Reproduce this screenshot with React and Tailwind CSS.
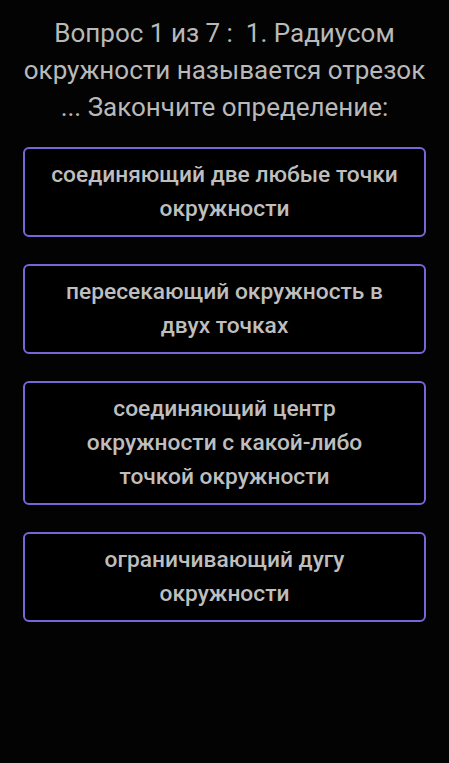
import React from 'react';

const answers = [
  'соединяющий две любые точки окружности',
  'пересекающий окружность в двух точках',
  'соединяющий центр окружности с какой-либо точкой окружности',
  'ограничивающий дугу окружности',
];

export default function App() {
  return (
    <div
      className="min-h-[763px] bg-[#030303] px-[23px] pt-[15px]"
      style={{ fontFamily: 'Roboto, "Noto Sans", sans-serif' }}
    >
      {/* question */}
      <h1 className="-mx-[12px] text-center text-[26px] leading-[37px] font-normal text-[#b9b9b9]">
        Вопрос 1 из 7 :&nbsp; 1. Радиусом окружности называется отрезок ... Закончите определение:
      </h1>

      {/* answers */}
      <div className="mt-[21px] flex flex-col gap-[27px]">
        {answers.map((a) => (
          <button
            key={a}
            className="w-full rounded-[6px] border-2 border-[#7866d8] bg-black px-[24px] py-[9px] text-center text-[22.75px] leading-[34px] font-medium text-[#bebebe]"
          >
            {a}
          </button>
        ))}
      </div>
    </div>
  );
}
